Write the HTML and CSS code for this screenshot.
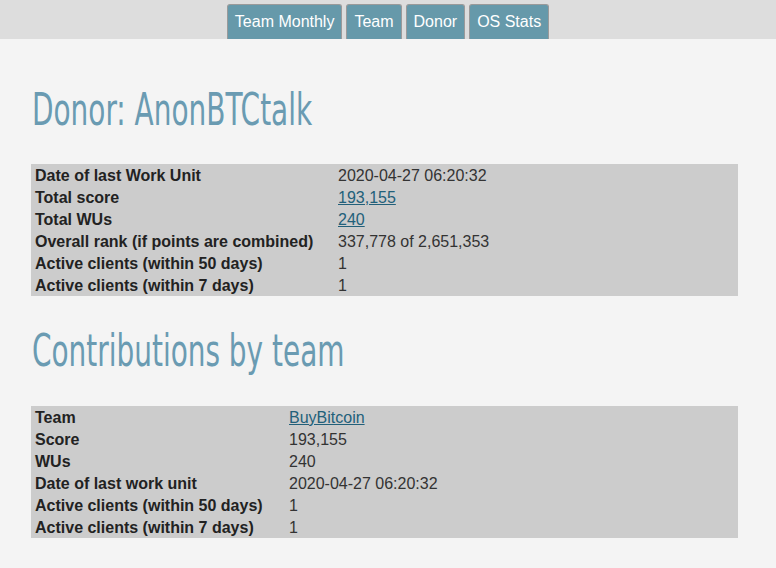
FILE: index.html
```html
<!DOCTYPE html>
<html>
<head>
    <meta charset="UTF-8">
    <meta name="viewport" content="width=device-width, initial-scale=1.0">
    <title>Donor: AnonBTCtalk</title>
    <link rel="stylesheet" href="styles.css">
</head>
<body>

    <div class="topbar">
        <a class="tab" href="#">Team Monthly</a>
        <a class="tab" href="#">Team</a>
        <a class="tab" href="#">Donor</a>
        <a class="tab" href="#">OS Stats</a>
    </div>

    <div class="content">
        <h1>Donor: AnonBTCtalk</h1>
        <table class="stats donor-table">
            <tr><td>Date of last Work Unit</td><td>2020-04-27 06:20:32</td></tr>
            <tr><td>Total score</td><td><a href="#">193,155</a></td></tr>
            <tr><td>Total WUs</td><td><a href="#">240</a></td></tr>
            <tr><td>Overall rank (if points are combined)</td><td>337,778 of 2,651,353</td></tr>
            <tr><td>Active clients (within 50 days)</td><td>1</td></tr>
            <tr><td>Active clients (within 7 days)</td><td>1</td></tr>
        </table>

        <h1>Contributions by team</h1>
        <table class="stats team-table">
            <tr><td>Team</td><td><a href="#">BuyBitcoin</a></td></tr>
            <tr><td>Score</td><td>193,155</td></tr>
            <tr><td>WUs</td><td>240</td></tr>
            <tr><td>Date of last work unit</td><td>2020-04-27 06:20:32</td></tr>
            <tr><td>Active clients (within 50 days)</td><td>1</td></tr>
            <tr><td>Active clients (within 7 days)</td><td>1</td></tr>
        </table>
    </div>

</body>
</html>
```

FILE: styles.css
```css
body { font-family: "Liberation Sans", Arial, sans-serif; font-size: 16px; background-color: #f4f4f4; color: #333; margin: 0; }
.topbar { background-color: #dddddd; height: 39px; display: flex; justify-content: center; align-items: flex-end; gap: 4px; }
.tab { background-color: #6699aa; color: #fff; text-decoration: none; line-height: 18px; padding: 8px 7px 8px; border: 1px solid #9a9a9a; border-bottom: none; border-radius: 3px 3px 0 0; }
.tab:hover { background-color: #5a8b9c; }
.content { padding: 0 38px 30px 31px; }
h1 { font-family: "Liberation Sans Narrow", "DejaVu Sans Condensed", sans-serif; font-weight: normal; font-size: 45px; line-height: 54px; color: #6a9bb2; margin: 44px 0 27px 1px; transform: scaleX(0.69); transform-origin: left; }
.stats + h1 { margin-top: 28px; margin-bottom: 28px; }
.stats { width: 707px; background-color: #cccccc; border-collapse: collapse; }
.stats td { padding: 3px 4px 1px; line-height: 18px; vertical-align: top; }
.stats td:first-child { font-weight: bold; color: #222; }
.donor-table td:first-child { width: 295px; }
.team-table td:first-child { width: 246px; }
.stats a { color: #22607a; }
```
